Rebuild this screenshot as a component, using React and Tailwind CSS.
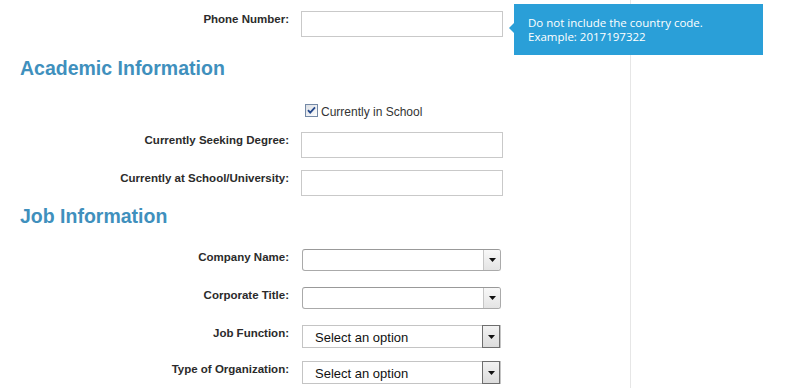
const Label = ({ children }) => (
  <div className="w-[289px] shrink-0 pt-[1px] text-right text-[11.5px] font-bold leading-[15px] text-[#2b2b2b]">
    {children}
  </div>
);

const TextRow = ({ label, className = '' }) => (
  <div className={`flex items-start ${className}`}>
    <Label>{label}</Label>
    <div className="ml-[12px] h-[26px] w-[202px] border border-[#c9c9c9] bg-white"></div>
  </div>
);

const Arrow = () => (
  <svg width="7" height="4" viewBox="0 0 7 4">
    <path d="M0 0H7L3.5 4Z" fill="#111" />
  </svg>
);

const ComboRow = ({ label, className = '' }) => (
  <div className={`flex items-start ${className}`}>
    <Label>{label}</Label>
    <div className="ml-[13px] flex h-[22px] w-[199px] overflow-hidden rounded-[3px] border border-[#aaa] border-t-[#999] bg-white">
      <div className="flex-1"></div>
      <div className="flex w-[17px] items-center justify-center border-l border-[#c6c6c6] bg-gradient-to-b from-[#f8f8f8] to-[#e4e4e4]">
        <Arrow />
      </div>
    </div>
  </div>
);

const SelectRow = ({ label, className = '' }) => (
  <div className={`flex items-start ${className}`}>
    <Label>{label}</Label>
    <div className="ml-[13px] flex h-[23px] w-[199px] items-center border border-[#c4c4c4] bg-white">
      <div className="flex-1 pl-[12px] pt-[1px] text-[13px] leading-[15px] text-[#111]">Select an option</div>
      <div className="flex h-[23px] w-[18px] items-center justify-center border border-[#6e6e6e] bg-gradient-to-b from-[#f2f2f2] to-[#dcdcdc]">
        <Arrow />
      </div>
    </div>
  </div>
);

const Heading = ({ children, className = '' }) => (
  <h2 className={`pl-[20px] text-[19.5px] font-bold leading-[24px] text-[#3f90bd] ${className}`}>
    {children}
  </h2>
);

export default function App() {
  return (
    <div className="relative flex h-[388px] w-[785px] overflow-hidden bg-white font-['Liberation_Sans',Arial,sans-serif]">
      <div className="h-full w-[631px] shrink-0 border-r border-[#e6e6e6] pt-[11px]">
        <TextRow label="Phone Number:" />

        <Heading className="mt-[19px]">Academic Information</Heading>

        <div className="mt-[24px] flex h-[15px] items-start pl-[305px]">
          <svg width="13" height="13" viewBox="0 0 13 13">
            <defs>
              <linearGradient id="cb" x1="0" y1="0" x2="1" y2="1">
                <stop offset="0" stopColor="#d9dde3" />
                <stop offset="1" stopColor="#ffffff" />
              </linearGradient>
            </defs>
            <rect x="0.5" y="0.5" width="12" height="12" fill="url(#cb)" stroke="#7489a6" />
            <path d="M3 6.2L5.2 8.6L10 3.4" fill="none" stroke="#24488c" strokeWidth="1.8" />
          </svg>
          <span className="ml-[3px] mt-[1px] text-[12px] leading-[15px] text-[#333]">Currently in School</span>
        </div>

        <TextRow label="Currently Seeking Degree:" className="mt-[13px]" />
        <TextRow label="Currently at School/University:" className="mt-[12px]" />

        <Heading className="mt-[8px]">Job Information</Heading>

        <ComboRow label="Company Name:" className="mt-[21px]" />
        <ComboRow label="Corporate Title:" className="mt-[16px]" />
        <SelectRow label="Job Function:" className="mt-[16px]" />
        <SelectRow label="Type of Organization:" className="mt-[13px]" />
      </div>

      <div className="absolute left-[514px] top-[4px] h-[51px] w-[249px] bg-[#2a9fd8] pl-[14px] pt-[12px] font-['Open_Sans',sans-serif] text-[11.5px] leading-[14px] text-white">
        <span className="absolute left-[-5px] top-[19px] h-0 w-0 border-y-[5px] border-r-[5px] border-y-transparent border-r-[#2a9fd8]"></span>
        <div>Do not include the country code.</div>
        <div>Example: 2017197322</div>
      </div>
    </div>
  );
}
